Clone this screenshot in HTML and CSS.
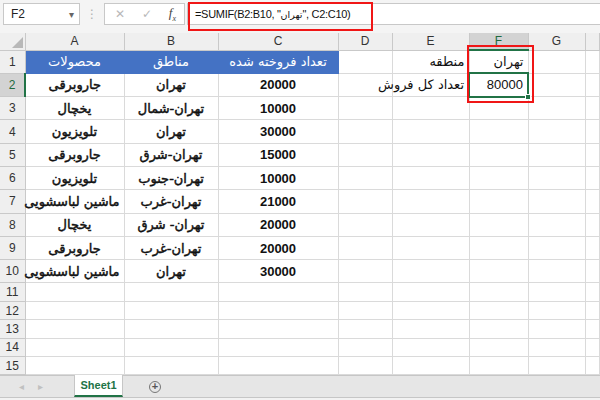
FILE: index.html
```html
<!DOCTYPE html>
<html lang="fa">
<head>
    <meta charset="UTF-8">
    <title>SUMIF</title>
    <link rel="stylesheet" href="styles.css">
</head>
<body>
<div class="excel">
    <div class="barra-formula">
        <div class="cuadro-nombre"><span>F2</span><span class="flecha">&#9662;</span></div>
        <div class="puntos">&#8942;</div>
        <div class="botones">
            <span class="x">&#10005;</span>
            <span class="ok">&#10003;</span>
            <span class="fx">f<sub>x</sub></span>
        </div>
        <div class="formula">=SUMIF(B2:B10, "<span class="fa-formula">تهران</span>", C2:C10)</div>
    </div>

    <table class="hoja">
        <colgroup>
            <col style="width:25px"><col style="width:99px"><col style="width:94px"><col style="width:120px">
            <col style="width:54px"><col style="width:77px"><col style="width:59px"><col style="width:57px"><col>
        </colgroup>
        <tr class="letras">
            <th class="esquina"></th><th>A</th><th>B</th><th>C</th><th>D</th><th>E</th><th class="activa">F</th><th>G</th><th></th>
        </tr>
        <tr class="alta">
            <th>1</th><td class="titulo">محصولات</td><td class="titulo">مناطق</td><td class="titulo">تعداد فروخته شده</td>
            <td></td><td class="rtl">منطقه</td><td class="rtl">تهران</td><td></td><td></td>
        </tr>
        <tr class="alta">
            <th class="activa">2</th><td class="fa">جاروبرقی</td><td class="fa">تهران</td><td class="num">20000</td>
            <td></td><td class="rtl">تعداد کل فروش</td><td class="valor seleccionada">80000<i class="tirador"></i></td><td></td><td></td>
        </tr>
        <tr class="alta">
            <th>3</th><td class="fa">یخچال</td><td class="fa">تهران-شمال</td><td class="num">10000</td>
            <td></td><td></td><td></td><td></td><td></td>
        </tr>
        <tr class="alta">
            <th>4</th><td class="fa">تلویزیون</td><td class="fa">تهران</td><td class="num">30000</td>
            <td></td><td></td><td></td><td></td><td></td>
        </tr>
        <tr class="alta">
            <th>5</th><td class="fa">جاروبرقی</td><td class="fa">تهران-شرق</td><td class="num">15000</td>
            <td></td><td></td><td></td><td></td><td></td>
        </tr>
        <tr class="alta">
            <th>6</th><td class="fa">تلویزیون</td><td class="fa">تهران-جنوب</td><td class="num">10000</td>
            <td></td><td></td><td></td><td></td><td></td>
        </tr>
        <tr class="alta">
            <th>7</th><td class="fa">ماشین لباسشویی</td><td class="fa">تهران-غرب</td><td class="num">21000</td>
            <td></td><td></td><td></td><td></td><td></td>
        </tr>
        <tr class="alta">
            <th>8</th><td class="fa">یخچال</td><td class="fa">تهران- شرق</td><td class="num">20000</td>
            <td></td><td></td><td></td><td></td><td></td>
        </tr>
        <tr class="alta">
            <th>9</th><td class="fa">جاروبرقی</td><td class="fa">تهران-غرب</td><td class="num">20000</td>
            <td></td><td></td><td></td><td></td><td></td>
        </tr>
        <tr class="alta">
            <th>10</th><td class="fa">ماشین لباسشویی</td><td class="fa">تهران</td><td class="num">30000</td>
            <td></td><td></td><td></td><td></td><td></td>
        </tr>
        <tr class="baja"><th>11</th><td></td><td></td><td></td><td></td><td></td><td></td><td></td><td></td></tr>
        <tr class="baja"><th>12</th><td></td><td></td><td></td><td></td><td></td><td></td><td></td><td></td></tr>
        <tr class="baja"><th>13</th><td></td><td></td><td></td><td></td><td></td><td></td><td></td><td></td></tr>
        <tr class="baja"><th>14</th><td></td><td></td><td></td><td></td><td></td><td></td><td></td><td></td></tr>
        <tr class="baja"><th>15</th><td></td><td></td><td></td><td></td><td></td><td></td><td></td><td></td></tr>
    </table>

    <div class="pestanas">
        <span class="nav">&#9666;</span>
        <span class="nav">&#9656;</span>
        <span class="hoja1">Sheet1</span>
        <span class="mas">+</span>
    </div>
    <div class="pie"></div>

    <!-- marcos rojos de anotación -->
    <div class="marco marco-formula"></div>
    <div class="marco marco-celda"></div>
</div>
</body>
</html>
```

FILE: styles.css
```css
* {
    box-sizing: border-box;
}

body {
    margin: 0;
    background: #fff;
    font-family: "Liberation Sans", "DejaVu Sans", sans-serif;
    overflow: hidden;
}

.excel {
    position: relative;
    width: 600px;
    height: 400px;
    display: flex;
    flex-direction: column;
}

/* barra de fórmulas */
.barra-formula {
    height: 33px;
    flex: none;
    display: flex;
    align-items: flex-start;
    padding: 3px 0 0 3px;
    background: #f4f4f4;
}

.cuadro-nombre {
    width: 77px;
    height: 22px;
    display: flex;
    align-items: center;
    justify-content: space-between;
    padding: 0 5px 0 7px;
    background: #fff;
    border: 1px solid #c8c8c8;
    font-size: 12px;
    color: #222;
}

.flecha {
    font-size: 10px;
    color: #666;
}

.puntos {
    width: 24px;
    height: 22px;
    display: flex;
    align-items: center;
    justify-content: center;
    color: #b0b0b0;
    font-size: 12px;
}

.botones {
    width: 81px;
    height: 22px;
    display: flex;
    align-items: center;
    justify-content: space-between;
    padding: 0 8px 0 10px;
    background: #fff;
    border: 1px solid #c8c8c8;
    color: #b8b8b8;
    font-size: 12px;
}

.botones .fx {
    font-family: "Liberation Serif", serif;
    font-style: italic;
    color: #444;
    font-size: 13px;
}

.botones .fx sub {
    font-size: 8px;
}

.formula {
    flex: 1;
    height: 22px;
    margin-left: 2px;
    padding-left: 7px;
    display: flex;
    align-items: center;
    white-space: pre;
    background: #fff;
    border: 1px solid #c8c8c8;
    border-right: none;
    font-size: 11px;
    letter-spacing: -0.3px;
    color: #111;
}

.fa-formula {
    font-family: "DejaVu Sans", sans-serif;
    font-size: 9.5px;
    letter-spacing: 0;
}

/* hoja */
.hoja {
    width: 600px;
    table-layout: fixed;
    border-collapse: collapse;
    flex: none;
}

.hoja th,
.hoja td {
    border: 1px solid #dadada;
    padding: 0 4px;
    white-space: nowrap;
    overflow: visible;
    font-size: 13px;
    color: #111;
}

.hoja th {
    background: #efefef;
    border-color: #c9c9c9;
    font-weight: normal;
    font-size: 12px;
    color: #333;
    text-align: center;
    padding: 0;
}

.letras th {
    height: 17px;
    border-top: none;
}

.esquina {
    position: relative;
    border-left: none;
}

.esquina::after {
    content: "";
    position: absolute;
    right: 2px;
    bottom: 2px;
    border-left: 11px solid transparent;
    border-bottom: 11px solid #b8b8b8;
}

.hoja th.activa {
    background: #d3d3d3;
    color: #1f6b3f;
}

.letras th.activa {
    border-bottom: 2px solid #217346;
}

.alta th.activa {
    border-right: 2px solid #217346;
}

.alta {
    height: 23.3px;
}

.baja {
    height: 18.4px;
}

.hoja tr > th:first-child {
    border-left: none;
}

.titulo {
    background: #4472c4;
    border-color: #4472c4 !important;
    color: #fff !important;
    text-align: center;
    font-family: "DejaVu Sans", sans-serif;
    font-size: 13px;
    direction: rtl;
}

.fa {
    text-align: center;
    font-family: "DejaVu Sans", sans-serif;
    font-size: 11.5px;
    -webkit-text-stroke: 0.45px #111;
    direction: rtl;
}

.num {
    text-align: center;
    font-weight: bold;
    font-size: 13px;
}

.rtl {
    text-align: right;
    direction: rtl;
    font-family: "DejaVu Sans", sans-serif;
    font-size: 12px;
}

.valor {
    text-align: right;
    font-size: 13px;
}

.seleccionada {
    position: relative;
    border: 2px solid #217346 !important;
}

.tirador {
    position: absolute;
    right: -4px;
    bottom: -4px;
    width: 6px;
    height: 6px;
    background: #217346;
    border: 1px solid #fff;
}

/* pestañas */
.pestanas {
    height: 22px;
    flex: none;
    display: flex;
    align-items: stretch;
    background: #e6e6e6;
    border-top: 1px solid #c6c6c6;
    font-size: 10px;
    color: #c0c0c0;
}

.nav {
    display: flex;
    align-items: center;
    padding-left: 19px;
}

.nav + .nav {
    padding-left: 14px;
}

.hoja1 {
    margin-left: 31px;
    width: 49px;
    display: flex;
    align-items: center;
    justify-content: center;
    background: #fff;
    border-left: 1px solid #c6c6c6;
    border-right: 1px solid #c6c6c6;
    border-bottom: 2px solid #217346;
    margin-top: -1px;
    color: #217346;
    font-weight: bold;
    font-size: 11px;
}

.mas {
    align-self: center;
    margin-left: 26px;
    width: 12px;
    height: 12px;
    border: 1px solid #777;
    border-radius: 50%;
    display: flex;
    align-items: center;
    justify-content: center;
    font-size: 11px;
    line-height: 1;
    color: #555;
    font-weight: bold;
}

.pie {
    flex: 1;
    background: #f2f2f2;
    border-top: 1px solid #c6c6c6;
}

/* anotaciones */
.marco {
    position: absolute;
    border: 2px solid #f01616;
}

.marco-formula {
    left: 188px;
    top: 2px;
    width: 185px;
    height: 29px;
}

.marco-celda {
    left: 467px;
    top: 45px;
    width: 67px;
    height: 58px;
}
```
